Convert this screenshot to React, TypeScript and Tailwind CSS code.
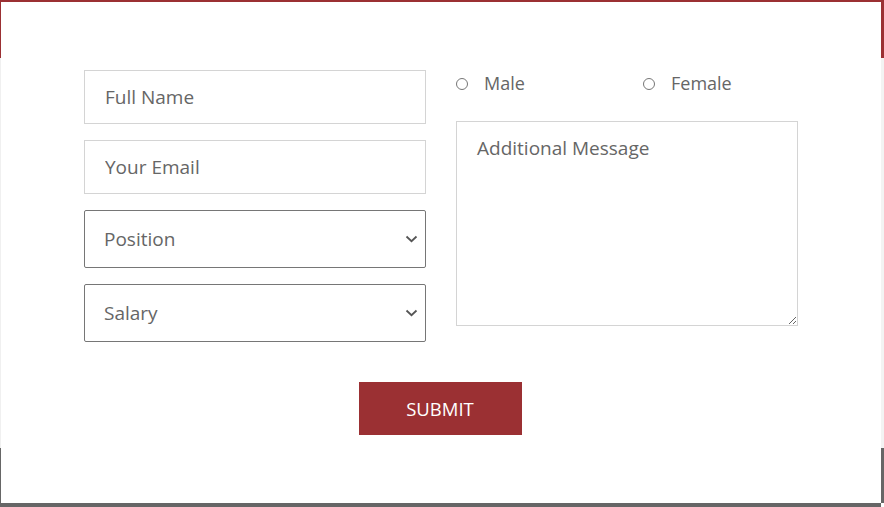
import type { ReactNode } from 'react';

const font = { fontFamily: '"Open Sans", "Noto Sans", sans-serif' };

function TextField({ placeholder }: { placeholder: string }) {
  return (
    <input
      type="text"
      placeholder={placeholder}
      className="box-border h-[54px] w-full border border-[#d4d4d4] bg-white px-5 text-[19px] text-[#555] outline-none placeholder:text-[#666]"
    />
  );
}

function SelectField({ label }: { label: string }) {
  return (
    <div className="relative h-[58px] w-full">
      <select
        defaultValue=""
        className="box-border h-full w-full appearance-none rounded-[2px] border border-[#767676] bg-white pl-[19px] pr-10 text-[19px] text-[#666] outline-none"
      >
        <option value="" disabled>
          {label}
        </option>
      </select>
      <svg
        className="pointer-events-none absolute right-[8px] top-1/2 -translate-y-1/2"
        width="13"
        height="8"
        viewBox="0 0 13 8"
        fill="none"
        stroke="#555"
        strokeWidth="1.8"
        aria-hidden="true"
      >
        <path d="M1.5 1.5 6.5 6.2 11.5 1.5" />
      </svg>
    </div>
  );
}

function Radio({ label, className }: { label: string; className?: string }) {
  return (
    <label className={`flex items-center gap-[16px] text-[18px] text-[#666] ${className ?? ''}`}>
      <span className="h-[12px] w-[12px] shrink-0 rounded-full border border-[#767676] bg-white" />
      {label}
    </label>
  );
}

function Strip({ children, className }: { children: ReactNode; className: string }) {
  return <div className={`flex shrink-0 flex-col ${className}`}>{children}</div>;
}

export default function App() {
  return (
    <div className="flex h-[507px] w-[884px] bg-white" style={font}>
      <Strip className="w-px">
        <div className="h-[58px] bg-[#9b3033]" />
        <div className="h-[390px] bg-[#f0f0f0]" />
        <div className="flex-1 bg-[#666]" />
      </Strip>

      <div className="flex flex-1 flex-col border-b-4 border-t-2 border-[#9b3033] border-b-[#666]">
        <form className="flex flex-col items-center pt-[68px]" onSubmit={(e) => e.preventDefault()}>
          <div className="flex w-[714px] gap-[30px]">
            <div className="flex w-[342px] flex-col gap-4">
              <TextField placeholder="Full Name" />
              <TextField placeholder="Your Email" />
              <SelectField label="Position" />
              <SelectField label="Salary" />
            </div>
            <div className="flex w-[342px] flex-col">
              <div className="flex h-[27px] items-center">
                <Radio label="Male" className="w-[187px]" />
                <Radio label="Female" />
              </div>
              <textarea
                placeholder="Additional Message"
                className="mt-[24px] box-border h-[205px] w-full border border-[#d4d4d4] bg-white px-5 pt-[12px] text-[19px] text-[#555] outline-none placeholder:text-[#666]"
              />
            </div>
          </div>
          <button
            type="submit"
            className="mr-[2px] mt-10 h-[53px] w-[163px] bg-[#9b3033] text-[18.5px] uppercase text-white"
          >
            Submit
          </button>
        </form>
      </div>

      <Strip className="w-[3px]">
        <div className="h-[58px] bg-[#9b3033]" />
        <div className="h-[390px] bg-[#f3f3f3]" />
        <div className="flex-1 bg-[#666]" />
        <div className="h-[4px] bg-white" />
      </Strip>
    </div>
  );
}
